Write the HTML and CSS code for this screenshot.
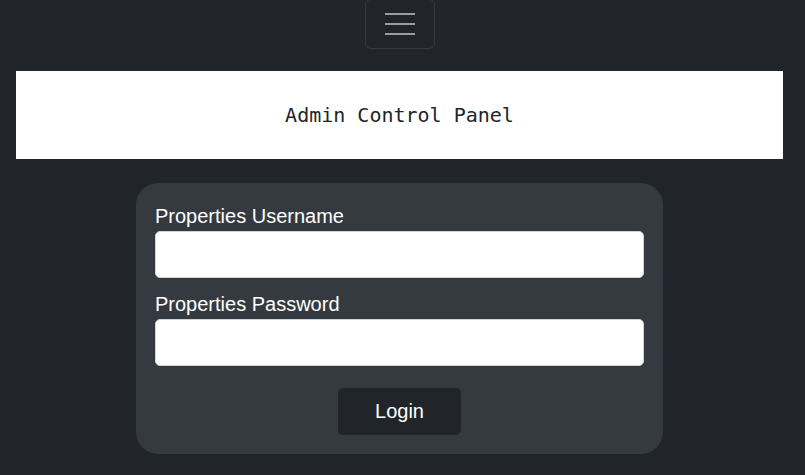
FILE: index.html
```html
<!DOCTYPE html>
<html lang="en">
<head>
<meta charset="utf-8">
<title>Admin Control Panel</title>
<link rel="stylesheet" href="styles.css">
</head>
<body>
<div class="page">
  <header class="topbar">
    <button class="toggler" type="button" aria-label="Toggle navigation">
      <svg class="toggler-icon" width="30" height="22" viewBox="0 0 30 22" aria-hidden="true">
        <path d="M0 1h30M0 11h30M0 21h30" stroke="rgba(255,255,255,0.55)" stroke-width="2" fill="none"/>
      </svg>
    </button>
  </header>
  <div class="banner">Admin Control Panel</div>
  <form class="card">
    <label class="label" for="user">Properties Username</label>
    <input class="input" id="user" type="text">
    <label class="label label-second" for="pass">Properties Password</label>
    <input class="input" id="pass" type="password">
    <div class="actions">
      <button class="btn" type="button">Login</button>
    </div>
  </form>
</div>
</body>
</html>
```
FILE: styles.css
```css
html, body {
  margin: 0;
  padding: 0;
  background: #212529;
}
body {
  font-family: "Liberation Sans", Arial, sans-serif;
  height: 475px;
  overflow: hidden;
}
.page {
  width: 799px;
}
.topbar {
  display: flex;
  justify-content: center;
}
.toggler {
  box-sizing: border-box;
  width: 70px;
  height: 50px;
  margin-top: -1px;
  padding: 0;
  background: transparent;
  border: 1px solid rgba(255,255,255,0.1);
  border-radius: 6px;
  display: flex;
  align-items: center;
  justify-content: center;
}
.toggler-icon {
  display: block;
}
.banner {
  margin: 22px 16px 0;
  height: 88px;
  background: #ffffff;
  display: flex;
  align-items: center;
  justify-content: center;
  font-family: "DejaVu Sans Mono", "Liberation Mono", monospace;
  font-size: 20px;
  color: #212529;
}
.card {
  box-sizing: border-box;
  width: 527px;
  margin: 24px auto 0;
  padding: 18px 19px 19px;
  background: #343a40;
  border-radius: 22px;
  display: flex;
  flex-direction: column;
}
.label {
  display: block;
  color: #ffffff;
  font-size: 20px;
  line-height: 30px;
}
.label-second {
  margin-top: 11px;
}
.input {
  box-sizing: border-box;
  width: 100%;
  height: 47px;
  margin: 0;
  padding: 8px 16px;
  border: 1px solid #ced4da;
  border-radius: 5px;
  background: #ffffff;
  font-family: "Liberation Sans", Arial, sans-serif;
  font-size: 20px;
}
.actions {
  display: flex;
  justify-content: center;
  margin-top: 22px;
}
.btn {
  box-sizing: border-box;
  width: 123px;
  height: 47px;
  border: none;
  border-radius: 5px;
  background: #212529;
  color: #ffffff;
  font-family: "Liberation Sans", Arial, sans-serif;
  font-size: 20px;
  padding: 0;
}
```
